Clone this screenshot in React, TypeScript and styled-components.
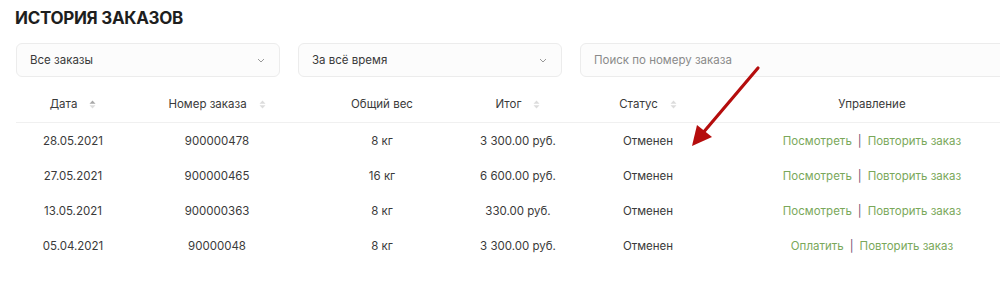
import React from "react";
import styled, { createGlobalStyle } from "styled-components";

const Global = createGlobalStyle`
  html, body { margin: 0; padding: 0; background: #fff; }
  body { font-family: Inter, "Noto Sans", sans-serif; color: #3a3a3a; overflow: hidden; }
`;

const Page = styled.div`
  position: relative;
  width: 1000px;
  height: 302px;
  padding: 6px 0 0 16px;
  box-sizing: border-box;
  overflow: hidden;
`;

const Title = styled.h1`
  margin: 0 0 0 -1px;
  font-family: Inter, sans-serif;
  font-size: 17px;
  font-weight: 700;
  letter-spacing: -0.3px;
  color: #1e1e1e;
  line-height: 24px;
`;

const Filters = styled.div`
  display: grid;
  grid-template-columns: 264px 264px 440px;
  column-gap: 18px;
  margin-top: 13px;
`;

const Box = styled.div<{ $placeholder?: boolean }>`
  height: 34px;
  box-sizing: border-box;
  border: 1px solid #ececec;
  border-radius: 6px;
  background: #fcfcfc;
  display: flex;
  align-items: center;
  justify-content: space-between;
  padding: 0 14px 0 13px;
  font-size: 11.5px;
  color: ${(p) => (p.$placeholder ? "#8a8a8a" : "#3a3a3a")};
`;

const Chevron = () => (
  <svg width="8" height="5" viewBox="0 0 8 5">
    <path d="M1 1l3 3 3-3" fill="none" stroke="#999" strokeWidth="1" />
  </svg>
);

const cols = "114px 174px 156px 116px 144px 304px";

const HeadRow = styled.div`
  display: grid;
  grid-template-columns: ${cols};
  height: 46px;
  box-sizing: border-box;
  padding-top: 9px;
  align-items: center;
  border-bottom: 1px solid #f0f0f0;
  font-size: 11.5px;
  color: #3a3a3a;
`;

const HeadCell = styled.div`
  display: flex;
  justify-content: center;
  align-items: center;
  gap: 12px;
`;

const Row = styled.div`
  display: grid;
  grid-template-columns: ${cols};
  height: 35px;
  align-items: center;
  font-size: 11.5px;
  color: #3a3a3a;
`;

const Cell = styled.div`
  text-align: center;
`;

const Actions = styled.div`
  display: flex;
  justify-content: center;
  align-items: center;
  gap: 6px;
`;

const Link = styled.span`
  color: #7aa85a;
`;

const Sep = styled.span`
  color: #6e4f70;
`;

const SortIcon = ({ active }: { active?: boolean }) => (
  <svg width="7" height="9" viewBox="0 0 7 9">
    <path d="M3.5 0.5L6.5 3.8H0.5Z" fill={active ? "#a8a8a8" : "#dcdcdc"} />
    <path d="M3.5 8.5L6.5 5.2H0.5Z" fill="#dcdcdc" />
  </svg>
);

const Arrow = styled.svg`
  position: absolute;
  left: 688px;
  top: 64px;
`;

const rows = [
  ["28.05.2021", "900000478", "8 кг", "3 300.00 руб.", "Отменен", "Посмотреть"],
  ["27.05.2021", "900000465", "16 кг", "6 600.00 руб.", "Отменен", "Посмотреть"],
  ["13.05.2021", "900000363", "8 кг", "330.00 руб.", "Отменен", "Посмотреть"],
  ["05.04.2021", "90000048", "8 кг", "3 300.00 руб.", "Отменен", "Оплатить"],
];

export default function App() {
  return (
    <>
      <Global />
      <Page>
        <Title>ИСТОРИЯ ЗАКАЗОВ</Title>
        <Filters>
          <Box>
            <span>Все заказы</span>
            <Chevron />
          </Box>
          <Box>
            <span>За всё время</span>
            <Chevron />
          </Box>
          <Box $placeholder>
            <span>Поиск по номеру заказа</span>
          </Box>
        </Filters>
        <HeadRow>
          <HeadCell>
            <span>Дата</span>
            <SortIcon active />
          </HeadCell>
          <HeadCell>
            <span>Номер заказа</span>
            <SortIcon />
          </HeadCell>
          <HeadCell>
            <span>Общий вес</span>
          </HeadCell>
          <HeadCell>
            <span>Итог</span>
            <SortIcon />
          </HeadCell>
          <HeadCell>
            <span>Статус</span>
            <SortIcon />
          </HeadCell>
          <HeadCell>
            <span>Управление</span>
          </HeadCell>
        </HeadRow>
        {rows.map((r) => (
          <Row key={r[1]}>
            <Cell>{r[0]}</Cell>
            <Cell>{r[1]}</Cell>
            <Cell>{r[2]}</Cell>
            <Cell>{r[3]}</Cell>
            <Cell>{r[4]}</Cell>
            <Actions>
              <Link>{r[5]}</Link>
              <Sep>|</Sep>
              <Link>Повторить заказ</Link>
            </Actions>
          </Row>
        ))}
        <Arrow width="80" height="90" viewBox="0 0 80 90">
          <line x1="70" y1="4" x2="14" y2="70" stroke="#b50d0d" strokeWidth="3.2" strokeLinecap="round" />
          <path d="M4 82 L9 61 L24 73 Z" fill="#b50d0d" />
        </Arrow>
      </Page>
    </>
  );
}
